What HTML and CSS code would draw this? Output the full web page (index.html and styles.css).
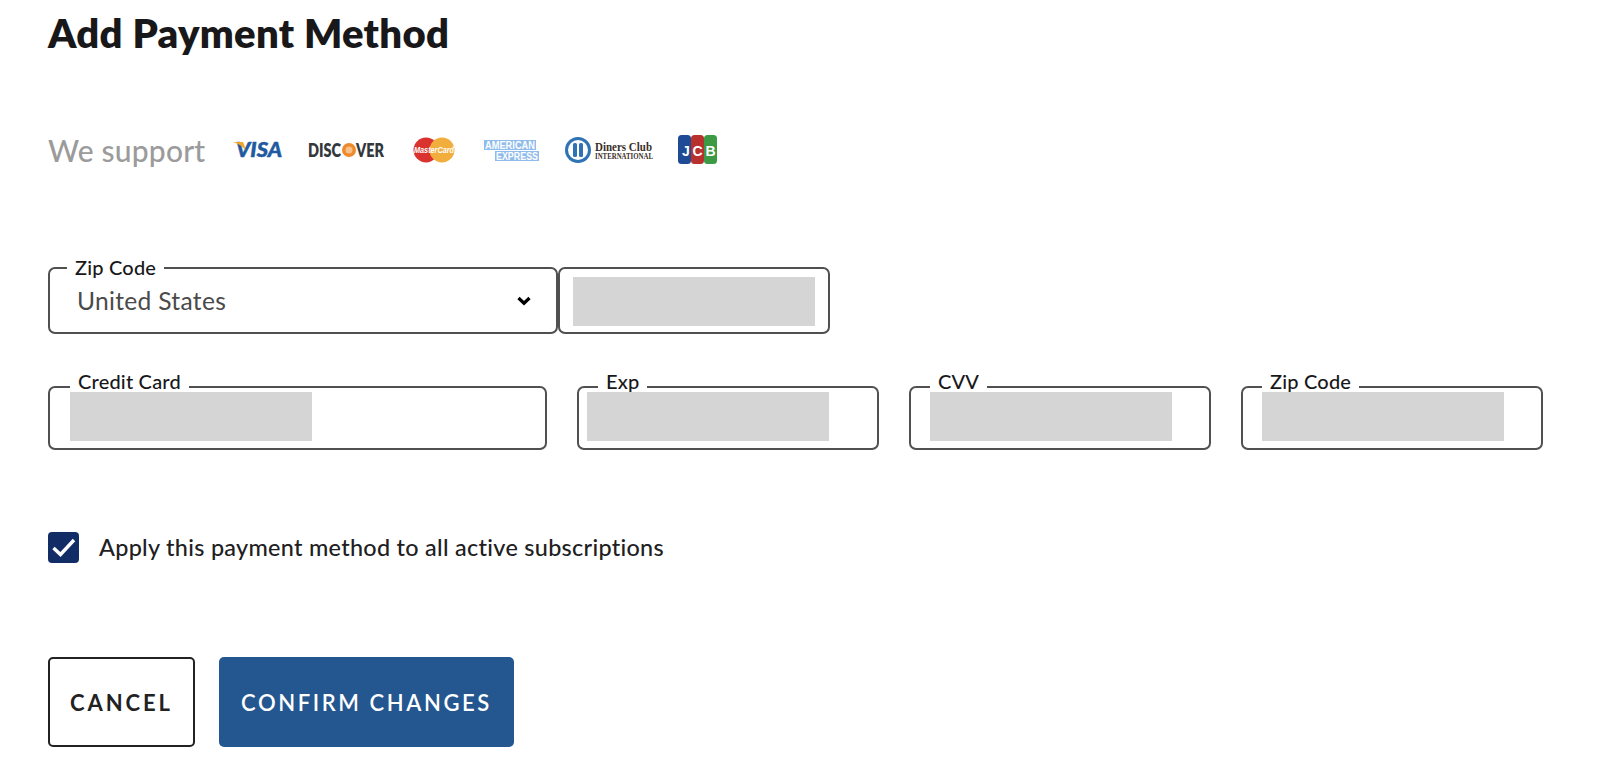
FILE: index.html
```html
<!DOCTYPE html>
<html lang="en">
<head>
<meta charset="utf-8">
<title>Add Payment Method</title>
<link rel="stylesheet" href="styles.css">
</head>
<body>
<main class="page">
  <h1 class="title">Add Payment Method</h1>

  <section class="support">
    <span class="support-label">We support</span>
    <ul class="brands">
      <li class="brand brand-visa">
        <svg width="49" height="20" viewBox="0 0 49 20"><text x="3" y="17" class="visa-text" textLength="46" lengthAdjust="spacingAndGlyphs">VISA</text><path d="M0 2 H9 C10.500 2 11 3 12.500 10 C9 6 5 3.500 0 2Z" fill="#f0a629"/></svg>
      </li>
      <li class="brand brand-discover">
        <svg width="76" height="20" viewBox="0 0 76 20"><circle cx="41" cy="10" r="7" fill="#ee8a2c"/><circle cx="41" cy="10" r="3.500" fill="#f7c08a"/><text x="0" y="16.500" class="disc-text" textLength="33" lengthAdjust="spacingAndGlyphs">DISC</text><text x="48" y="16.500" class="disc-text" textLength="28" lengthAdjust="spacingAndGlyphs">VER</text></svg>
      </li>
      <li class="brand brand-mc">
        <svg width="42" height="26" viewBox="0 0 42 26"><circle cx="13" cy="13" r="12.500" fill="#d9322f"/><circle cx="29" cy="13" r="12.500" fill="#f2ae3d"/><text x="1" y="16" class="mc-text" textLength="40" lengthAdjust="spacingAndGlyphs">MasterCard</text></svg>
      </li>
      <li class="brand brand-amex">
        <svg width="55" height="23" viewBox="0 0 55 23"><rect x="0" y="1" width="52" height="10" fill="#8fbcec"/><rect x="11" y="12" width="44" height="10" fill="#8fbcec"/><text x="1" y="10" class="amex-text" textLength="50" lengthAdjust="spacingAndGlyphs">AMERICAN</text><text x="12" y="21" class="amex-text" textLength="42" lengthAdjust="spacingAndGlyphs">EXPRESS</text></svg>
      </li>
      <li class="brand brand-diners">
        <svg width="89" height="26" viewBox="0 0 89 26"><circle cx="14" cy="13" r="13" fill="#2f73b5"/><circle cx="14" cy="13" r="10" fill="#fff"/><rect x="9" y="6" width="4" height="14" rx="1.500" fill="#2f73b5"/><rect x="15" y="6" width="4" height="14" rx="1.500" fill="#2f73b5"/><text x="31" y="14" class="diners-text" textLength="57" lengthAdjust="spacingAndGlyphs">Diners Club</text><text x="31" y="21.500" class="diners-sub" textLength="58" lengthAdjust="spacingAndGlyphs">INTERNATIONAL</text></svg>
      </li>
      <li class="brand brand-jcb">
        <svg width="39" height="30" viewBox="0 0 39 30"><rect x="0" y="0" width="13" height="29" rx="3.500" fill="#1f4a94"/><rect x="13" y="0" width="13" height="29" rx="3.500" fill="#b8312f"/><rect x="26" y="0" width="13" height="29" rx="3.500" fill="#3c9a45"/><text x="4" y="21" class="jcb-text">J</text><text x="14.500" y="21" class="jcb-text">C</text><text x="27.500" y="21" class="jcb-text">B</text></svg>
      </li>
    </ul>
  </section>

  <form class="form">
    <div class="address-row">
      <div class="field field-select">
        <span class="field-label label-zip">Zip Code</span>
        <span class="select-value">United States</span>
        <svg class="chevron" width="14" height="10" viewBox="0 0 14 10"><path d="M1.500 2 L7 7.200 L12.500 2" fill="none" stroke="#000" stroke-width="3.200"/></svg>
      </div>
      <div class="field field-zip"><div class="redact"></div></div>
    </div>

    <div class="card-row">
      <div class="field field-card">
        <span class="field-label label-card">Credit Card</span>
        <div class="redact"></div>
      </div>
      <div class="field field-exp">
        <span class="field-label">Exp</span>
        <div class="redact"></div>
      </div>
      <div class="field field-small">
        <span class="field-label">CVV</span>
        <div class="redact"></div>
      </div>
      <div class="field field-small">
        <span class="field-label">Zip Code</span>
        <div class="redact"></div>
      </div>
    </div>

    <label class="apply">
      <span class="checkbox">
        <svg width="24" height="20" viewBox="0 0 24 20"><path d="M1.500 10 L8.500 16.500 L22 2" fill="none" stroke="#fff" stroke-width="3.400"/></svg>
      </span>
      <span class="apply-text">Apply this payment method to all active subscriptions</span>
    </label>

    <div class="actions">
      <button type="button" class="btn btn-cancel">CANCEL</button>
      <button type="button" class="btn btn-confirm">CONFIRM CHANGES</button>
    </div>
  </form>
</main>
</body>
</html>
```

FILE: styles.css
```css
* { box-sizing: border-box; }
html, body { margin: 0; padding: 0; background: #fff; }
body {
  font-family: "Lato", "Liberation Sans", sans-serif;
  color: #1c1c1e;
  height: 773px;
  overflow: hidden;
}
.page { padding: 11px 57px 0 48px; }
.title {
  margin: 0;
  font-size: 40px;
  line-height: 44px;
  font-weight: 800;
  color: #18181a;
  letter-spacing: 0.3px;
}

.support {
  display: flex;
  align-items: center;
  margin-top: 72px;
  height: 46px;
}
.support-label {
  font-size: 30px;
  font-weight: 500;
  color: #9b9b9b;
  width: 185px;
  flex: none;
  letter-spacing: 0.2px;
}
.brands {
  list-style: none;
  margin: 0;
  padding: 0;
  display: flex;
  align-items: center;
}
.brand { display: flex; }
.brand svg { display: block; overflow: visible; }
.brand-visa { width: 75px; }
.brand-discover { width: 105px; }
.brand-mc { width: 71px; }
.brand-amex { width: 80px; }
.brand-diners { width: 114px; }

.visa-text { font: italic 900 21px "Lato", sans-serif; fill: #1f5aa0; stroke: #1f5aa0; stroke-width: 0.5px; }
.disc-text { font: 800 19px "Lato", sans-serif; fill: #33383c; }
.mc-text { font: italic 700 9px "Liberation Sans", sans-serif; fill: #fff; }
.amex-text { font: 700 10px "Liberation Sans", sans-serif; fill: #fff; }
.diners-text { font: 700 13px "Liberation Serif", serif; fill: #3a2f28; }
.diners-sub { font: 700 8px "Liberation Serif", serif; fill: #3a2f28; }
.jcb-text { font: 700 14px "Liberation Sans", sans-serif; fill: #fff; }

.form { margin-top: 94px; }
.address-row { display: flex; height: 67px; }
.field {
  position: relative;
  border: 2px solid #505050;
  border-radius: 7px;
  background: #fff;
}
.field-select {
  width: 510px;
  display: flex;
  align-items: center;
  justify-content: space-between;
  padding: 0 25px 0 27px;
}
.select-value { font-size: 24.600px; color: #4a4a4a; letter-spacing: 0.3px; }
.chevron { display: block; }
.field-zip { width: 272px; padding: 8px 13px; }

.field-label {
  position: absolute;
  top: -15px;
  left: 19px;
  padding: 0 8px;
  background: #fff;
  font-size: 20px;
  line-height: 16px;
  font-weight: 500;
  color: #18181a;
  letter-spacing: 0.2px;
}
.label-zip { top: -10px; left: 17px; }
.label-card { left: 20px; }

.card-row {
  display: grid;
  grid-template-columns: 499px 302px 302px 302px;
  column-gap: 30px;
  height: 64px;
  margin-top: 52px;
}
.field-card .redact { margin: 4px 0 0 20px; }
.field-exp .redact { margin: 4px 0 0 8px; }
.field-small .redact { margin: 4px 0 0 19px; }
.redact { width: 242px; height: 49px; background: #d5d5d5; }

.apply {
  display: flex;
  align-items: center;
  margin-top: 82px;
  height: 31px;
}
.checkbox {
  width: 31px;
  height: 31px;
  flex: none;
  border-radius: 4px;
  background: #122c66;
  display: flex;
  align-items: center;
  justify-content: center;
}
.apply-text {
  margin-left: 20px;
  padding-bottom: 2px;
  font-size: 23.400px;
  font-weight: 500;
  color: #202022;
  letter-spacing: 0.3px;
}

.actions { display: flex; gap: 24px; margin-top: 94px; }
.btn {
  height: 90px;
  border-radius: 5px;
  font-family: inherit;
  font-size: 22px;
  font-weight: 700;
  letter-spacing: 2.600px;
  padding: 0;
}
.btn-cancel { width: 147px; background: #fff; border: 2px solid #222; color: #222; letter-spacing: 2.900px; }
.btn-confirm { width: 295px; background: #245690; border: 0; color: #fff; font-weight: 600; }
```
